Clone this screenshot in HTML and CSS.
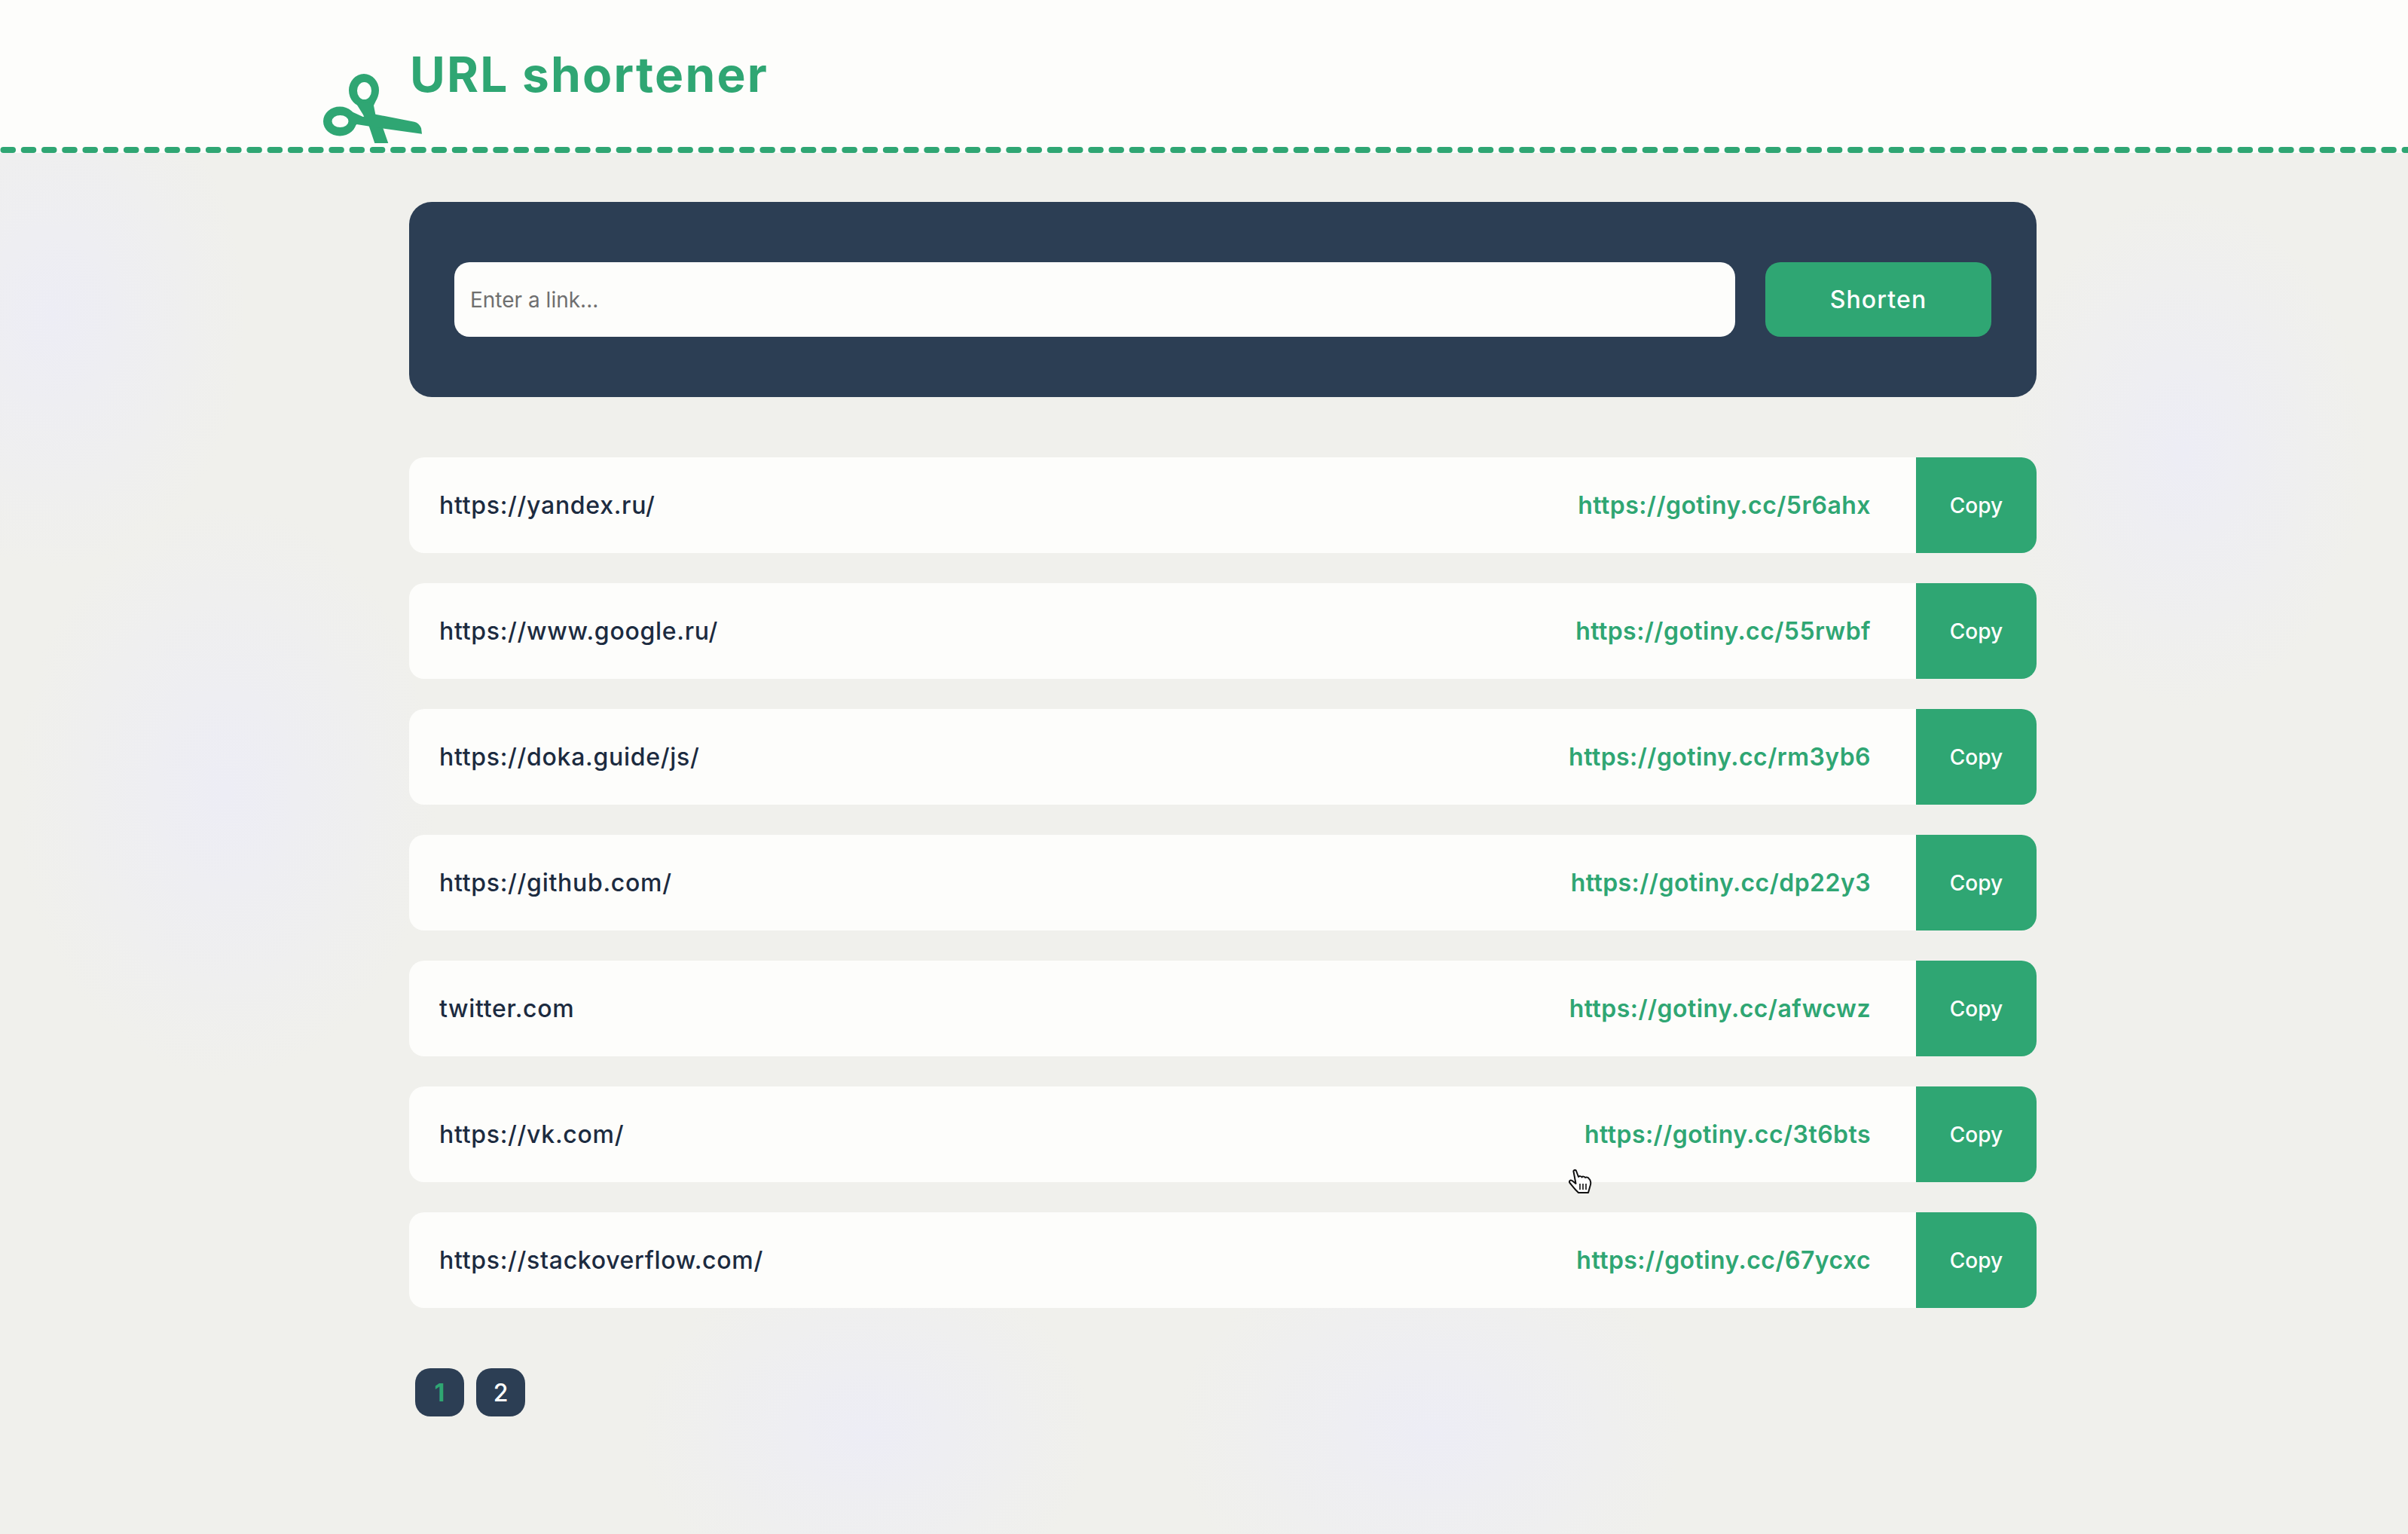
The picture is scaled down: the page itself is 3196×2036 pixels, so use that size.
FILE: index.html
```html
<!DOCTYPE html>
<html lang="en">
<head>
  <meta charset="UTF-8">
  <title>URL shortener</title>
  <link rel="stylesheet" href="styles.css">
</head>
<body>

  <!-- Header -->
  <header class="header">
    <div class="header-inner">
      <svg class="scissors" viewBox="0 0 131 92" width="131" height="92">
        <path fill-rule="evenodd" d="M34 22a20 22 0 1 0 40 0a20 22 0 1 0 -40 0zM45 22.500a9.500 11.500 0 1 1 19 0a9.500 11.500 0 1 1 -19 0zM0 63a22 19.500 0 1 0 44 0a22 19.500 0 1 0 -44 0zM11.500 63a11 8 0 1 1 22 0a11 8 0 1 1 -22 0z"/>
        <path d="M36 27L52.700 53.700L61 70.300L68.300 92H86.300L79.300 72L69.300 53.700L67 42L71.700 32L62 38L46 37Z"/>
        <path d="M31 47L52.700 57L69.300 53.700L121 63.700Q127 65 130 72L131 79.700L81 72.700L44.300 67L37.700 75.300L36 62Z"/>
      </svg>
      <h1 class="page-title">URL shortener</h1>
    </div>
    <svg class="cut-line" width="100%" height="8">
      <line x1="0" y1="4" x2="100%" y2="4"/>
    </svg>
  </header>

  <!-- Main content -->
  <main class="main-content">
    <form class="shorten-form">
      <input class="link-input" type="text" placeholder="Enter a link...">
      <button class="shorten-button" type="button">Shorten</button>
    </form>

    <div class="link-list">
      <div class="link-row">
        <span class="link-source">https://yandex.ru/</span>
        <a class="link-short" href="#">https://gotiny.cc/5r6ahx</a>
        <button class="copy-button" type="button">Copy</button>
      </div>
      <div class="link-row">
        <span class="link-source">https://www.google.ru/</span>
        <a class="link-short" href="#">https://gotiny.cc/55rwbf</a>
        <button class="copy-button" type="button">Copy</button>
      </div>
      <div class="link-row">
        <span class="link-source">https://doka.guide/js/</span>
        <a class="link-short" href="#">https://gotiny.cc/rm3yb6</a>
        <button class="copy-button" type="button">Copy</button>
      </div>
      <div class="link-row">
        <span class="link-source">https://github.com/</span>
        <a class="link-short" href="#">https://gotiny.cc/dp22y3</a>
        <button class="copy-button" type="button">Copy</button>
      </div>
      <div class="link-row">
        <span class="link-source">twitter.com</span>
        <a class="link-short" href="#">https://gotiny.cc/afwcwz</a>
        <button class="copy-button" type="button">Copy</button>
      </div>
      <div class="link-row">
        <span class="link-source">https://vk.com/</span>
        <a class="link-short" href="#">https://gotiny.cc/3t6bts</a>
        <button class="copy-button" type="button">Copy</button>
      </div>
      <div class="link-row">
        <span class="link-source">https://stackoverflow.com/</span>
        <a class="link-short" href="#">https://gotiny.cc/67ycxc</a>
        <button class="copy-button" type="button">Copy</button>
      </div>
    </div>

    <div class="pagination">
      <button class="page-button active" type="button">1</button>
      <button class="page-button" type="button">2</button>
    </div>
  </main>

  <!-- Mouse pointer caught in the screenshot -->
  <svg class="pointer" viewBox="0 0 31 33" width="31" height="33">
    <path class="pointer-hand" d="M6.500 3C6 1 9 0 10 2L13 10C14 8.500 17 9 17.500 10.500C18.500 9 21 9.500 22 11C23.500 10 26 10.500 27 12.500C29 14 30 18 28.500 22L26 31H13L10 28C7 25 4 21 1.500 18C0 16 2 13.500 4.500 15L9.500 19Z"/>
    <path class="pointer-lines" d="M15 19V27M19 19V27M23 19V27"/>
  </svg>

</body>
</html>
```

FILE: styles.css
```css
* {
  margin: 0;
  padding: 0;
  box-sizing: border-box;
}

body {
  font-family: Inter, "Open Sans", sans-serif;
  min-height: 100vh;
  color: #1c2b40;
  background-color: #f0f0ec;
  background-image:
    radial-gradient(ellipse 260px 340px at 70px 420px, #ededf5 0, rgba(237, 237, 245, 0) 100%),
    radial-gradient(ellipse 280px 380px at 300px 1050px, #ededf5 0, rgba(237, 237, 245, 0) 100%),
    radial-gradient(ellipse 340px 260px at 1900px 1900px, #ededf5 0, rgba(237, 237, 245, 0) 100%),
    radial-gradient(ellipse 300px 240px at 1150px 1900px, #ededf5 0, rgba(237, 237, 245, 0) 100%),
    radial-gradient(ellipse 240px 340px at 2900px 600px, #ededf5 0, rgba(237, 237, 245, 0) 100%);
}

/* Header */
.header {
  background: #fdfdfb;
}

.header-inner {
  display: flex;
  align-items: flex-start;
  height: 195px;
  padding-left: 429px;
}

.scissors {
  flex-shrink: 0;
  margin-top: 98px;
  margin-right: -16px;
  fill: #2fa673;
}

.page-title {
  margin-top: 59px;
  font-size: 64px;
  line-height: 80px;
  font-weight: 700;
  letter-spacing: 2.2px;
  color: #2fa673;
}

.cut-line {
  display: block;
}

.cut-line line {
  stroke: #2fa673;
  stroke-width: 8;
  stroke-linecap: round;
  stroke-dasharray: 12.5 14.74;
  stroke-dashoffset: -4.5;
}

/* Main content */
.main-content {
  width: 2160px;
  margin-left: 543px;
  padding-top: 65px;
}

.shorten-form {
  display: flex;
  gap: 40px;
  padding: 80px 60px;
  background: #2c3e54;
  border-radius: 30px;
}

.link-input {
  flex: 1;
  height: 99px;
  padding: 0 21px;
  border: none;
  outline: none;
  border-radius: 20px;
  background: #fdfdfb;
  font-family: inherit;
  font-size: 28px;
}

.link-input::placeholder {
  color: #6f6f6f;
}

.shorten-button {
  width: 300px;
  border: none;
  border-radius: 20px;
  background: #2fa673;
  color: #fff;
  font-family: inherit;
  font-size: 32px;
  font-weight: 500;
  letter-spacing: 1.1px;
}

.link-list {
  display: flex;
  flex-direction: column;
  gap: 40px;
  margin-top: 80px;
}

.link-row {
  display: flex;
  align-items: center;
  height: 127px;
  padding-left: 40px;
  background: #fdfdfb;
  border-radius: 20px;
  overflow: hidden;
  font-size: 32px;
  font-weight: 500;
}

.link-source {
  flex: 1;
  letter-spacing: 0.7px;
}

.link-short {
  margin-right: 60px;
  color: #2fa673;
  font-weight: 600;
  letter-spacing: 0.45px;
  text-decoration: none;
}

.copy-button {
  width: 160px;
  height: 100%;
  border: none;
  background: #2fa673;
  color: #fff;
  font-family: inherit;
  font-size: 28px;
  font-weight: 500;
}

.pagination {
  display: flex;
  gap: 16px;
  margin-top: 80px;
  padding-left: 8px;
}

.page-button {
  width: 65px;
  height: 64px;
  border: none;
  border-radius: 20px;
  background: #2c3e54;
  color: #fff;
  font-family: inherit;
  font-size: 32px;
  font-weight: 500;
}

.page-button.active {
  color: #2fa673;
  font-weight: 700;
}

/* Pointer */
.pointer {
  position: absolute;
  left: 2082px;
  top: 1552px;
}

.pointer-hand {
  fill: #fff;
  stroke: #111;
  stroke-width: 2;
  stroke-linejoin: round;
}

.pointer-lines {
  fill: none;
  stroke: #111;
  stroke-width: 1.6;
}
```
